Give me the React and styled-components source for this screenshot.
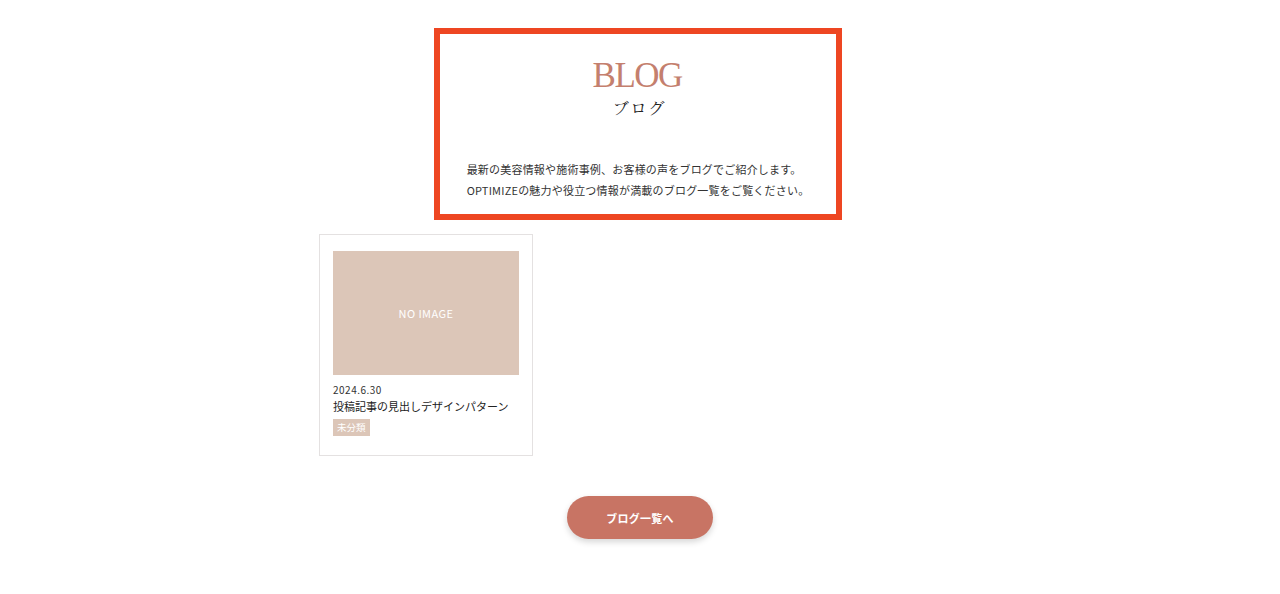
import React from 'react';
import styled, { createGlobalStyle } from 'styled-components';

const GlobalStyle = createGlobalStyle`
  body {
    margin: 0;
    background: #fff;
    font-family: "Noto Sans CJK JP", "Noto Sans", sans-serif;
    color: #333;
  }
`;

const Page = styled.main`
  width: 642px;
  margin: 0 auto;
  padding: 28px 0 54px;
  display: flex;
  flex-direction: column;
  align-items: center;
`;

const Heading = styled.section`
  box-sizing: border-box;
  width: 408px;
  height: 192px;
  margin-right: 4px;
  border: 6px solid #ee4622;
  padding-top: 22px;
  display: flex;
  flex-direction: column;
  align-items: center;
`;

const Title = styled.h2`
  margin: 0;
  font-family: "Liberation Serif", "Noto Serif CJK JP", serif;
  font-weight: 400;
  font-size: 35px;
  line-height: 40px;
  color: #c47f6e;
  letter-spacing: -1.5px;
  text-indent: -1.5px;
`;

const Subtitle = styled.p`
  margin: 0;
  padding-left: 0.2em;
  font-family: "Noto Serif CJK JP", "Noto Sans CJK JP", serif;
  font-size: 16px;
  line-height: 24px;
  letter-spacing: 0.12em;
  color: #222;
`;

const Lead = styled.p`
  margin: 39px 0 0;
  font-size: 11px;
  line-height: 21px;
  letter-spacing: 0.2px;
  color: #333;
  text-align: left;
`;

const CardGrid = styled.div`
  align-self: stretch;
  margin-top: 14px;
  display: grid;
  grid-template-columns: repeat(3, 214px);
`;

const Card = styled.article`
  box-sizing: border-box;
  height: 222px;
  border: 1px solid #e4e1e1;
  padding: 16px 13px 0;
`;

const Thumb = styled.div`
  height: 124px;
  background: #dcc6b8;
  display: flex;
  align-items: center;
  justify-content: center;
  color: #fff;
  font-size: 11px;
  letter-spacing: 0.04em;
`;

const Date = styled.div`
  margin-top: 8px;
  font-size: 10px;
  line-height: 14px;
  letter-spacing: 0.05em;
  color: #333;
`;

const CardTitle = styled.h3`
  margin: 1px 0 0;
  font-weight: 400;
  font-size: 11px;
  line-height: 16px;
  color: #222;
  white-space: nowrap;
`;

const Tag = styled.span`
  display: block;
  width: fit-content;
  margin-top: 5px;
  padding: 0 4px;
  background: #dcc6b8;
  color: #fff;
  font-size: 9.5px;
  line-height: 17px;
`;

const MoreButton = styled.a`
  margin-top: 40px;
  width: 146px;
  height: 43px;
  border-radius: 22px;
  background: #c87464;
  color: #fff;
  font-size: 11px;
  font-weight: 700;
  letter-spacing: 0.02em;
  display: flex;
  align-items: center;
  justify-content: center;
  box-shadow: 0 3px 6px rgba(0, 0, 0, 0.16);
  text-decoration: none;
`;

export default function App() {
  return (
    <>
      <GlobalStyle />
      <Page>
        <Heading>
          <Title>BLOG</Title>
          <Subtitle>ブログ</Subtitle>
          <Lead>
            最新の美容情報や施術事例、お客様の声をブログでご紹介します。
            <br />
            OPTIMIZEの魅力や役立つ情報が満載のブログ一覧をご覧ください。
          </Lead>
        </Heading>
        <CardGrid>
          <Card>
            <Thumb>NO IMAGE</Thumb>
            <Date>2024.6.30</Date>
            <CardTitle>投稿記事の見出しデザインパターン</CardTitle>
            <Tag>未分類</Tag>
          </Card>
        </CardGrid>
        <MoreButton href="#">ブログ一覧へ</MoreButton>
      </Page>
    </>
  );
}
